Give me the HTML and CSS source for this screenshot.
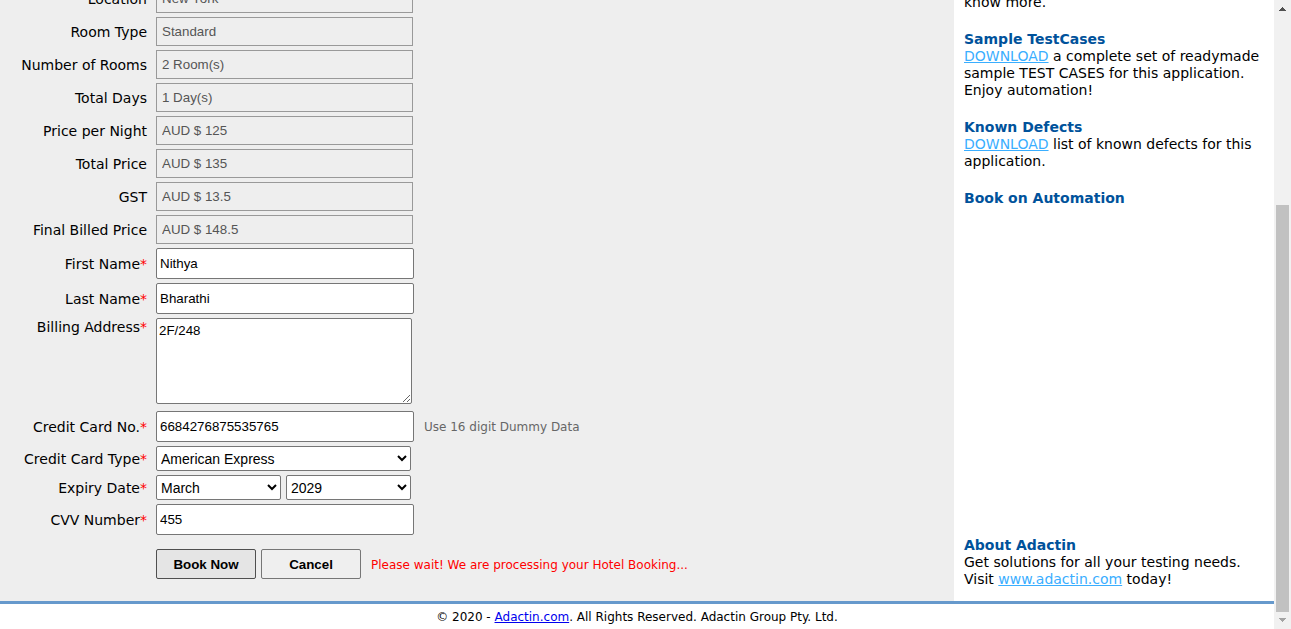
FILE: index.html
```html
<!DOCTYPE html>
<html lang="en">
<head>
<meta charset="utf-8">
<title>Adactin.com - Book Hotel</title>
<link rel="stylesheet" href="styles.css">
</head>
<body>
<div class="page">
  <div class="columns">
    <main class="main">
      <form class="form">
        <div class="row"><label for="location">Location</label><input class="readonly" id="location" value="New York" readonly></div>
        <div class="row"><label for="room-type">Room Type</label><input class="readonly" id="room-type" value="Standard" readonly></div>
        <div class="row"><label for="rooms">Number of Rooms</label><input class="readonly" id="rooms" value="2 Room(s)" readonly></div>
        <div class="row"><label for="days">Total Days</label><input class="readonly" id="days" value="1 Day(s)" readonly></div>
        <div class="row"><label for="night">Price per Night</label><input class="readonly" id="night" value="AUD $ 125" readonly></div>
        <div class="row"><label for="total">Total Price</label><input class="readonly" id="total" value="AUD $ 135" readonly></div>
        <div class="row"><label for="gst">GST</label><input class="readonly" id="gst" value="AUD $ 13.5" readonly></div>
        <div class="row"><label for="billed">Final Billed Price</label><input class="readonly" id="billed" value="AUD $ 148.5" readonly></div>
        <div class="row"><label for="first">First Name<span class="req">*</span></label><input class="field" id="first" value="Nithya"></div>
        <div class="row"><label for="last">Last Name<span class="req">*</span></label><input class="field" id="last" value="Bharathi"></div>
        <div class="row row-top"><label for="address">Billing Address<span class="req">*</span></label><textarea class="area" id="address">2F/248</textarea></div>
        <div class="row"><label for="card">Credit Card No.<span class="req">*</span></label><div class="group group-wide"><input class="field" id="card" value="6684276875535765"><span class="hint">Use 16 digit Dummy Data</span></div></div>
        <div class="row"><label for="card-type">Credit Card Type<span class="req">*</span></label><select class="select" id="card-type"><option>American Express</option></select></div>
        <div class="row"><label for="month">Expiry Date<span class="req">*</span></label><div class="group"><select class="select select-half" id="month"><option>March</option></select><select class="select select-half" aria-label="Expiry year"><option>2029</option></select></div></div>
        <div class="row"><label for="cvv">CVV Number<span class="req">*</span></label><input class="field" id="cvv" value="455"></div>
        <div class="row row-actions"><span></span><div class="group"><button class="button button-active" type="button">Book Now</button><button class="button" type="button">Cancel</button><span class="status">Please wait! We are processing your Hotel Booking...</span></div></div>
      </form>
    </main>
    <aside class="side">
      <section><p>know more.</p></section>
      <section><h2>Sample TestCases</h2><p><a href="#">DOWNLOAD</a> a complete set of readymade sample TEST CASES for this application. Enjoy automation!</p></section>
      <section><h2>Known Defects</h2><p><a href="#">DOWNLOAD</a> list of known defects for this application.</p></section>
      <section class="book"><h2>Book on Automation</h2></section>
      <section><h2>About Adactin</h2><p>Get solutions for all your testing needs. Visit <a href="#">www.adactin.com</a> today!</p></section>
    </aside>
  </div>
  <footer class="footer">© 2020 - <a href="#">Adactin.com</a>. All Rights Reserved. Adactin Group Pty. Ltd.</footer>
</div>
<div class="scrollbar" aria-hidden="true">
  <svg width="17" height="17" viewBox="0 0 17 17" shape-rendering="crispEdges"><path fill="#505050" d="M8 7h1v1h1v1h1v1h1v1H5v-1h1V9h1V8h1z"/></svg>
  <div class="thumb"></div>
  <svg width="17" height="17" viewBox="0 0 17 17" shape-rendering="crispEdges"><path fill="#a3a3a3" d="M5 6h7v1h-1v1h-1v1H9v1H8V9H7V8H6V7H5z"/></svg>
</div>
</body>
</html>
```
FILE: styles.css
```css
* { box-sizing: border-box; }

body {
  margin: 0;
  display: flex;
  height: 100vh;
  overflow: hidden;
  background: #fff;
  color: #000;
  font-family: Verdana, "DejaVu Sans", sans-serif;
  font-size: 14px;
  line-height: 17px;
}

.page {
  flex: 1;
  min-width: 0;
  display: flex;
  flex-direction: column;
}

.columns {
  flex: 1;
  min-height: 0;
  display: flex;
  border-bottom: 3px solid #69c;
}

.main {
  flex: 1;
  min-width: 0;
  background: #eee;
}

.form {
  display: flex;
  flex-direction: column;
  gap: 4px;
  margin-top: -16px;
}

.row {
  display: grid;
  grid-template-columns: 147px 1fr;
  column-gap: 9px;
  align-items: center;
  justify-items: start;
}

.row label {
  justify-self: end;
  padding-top: 2px;
  white-space: nowrap;
}

.row-top {
  align-items: start;
  margin-bottom: 3px;
}

.row-top label { padding-top: 1px; }

.row-actions { margin-top: 10px; }

.req {
  color: #f00;
  font-size: 14px;
  line-height: 14px;
}

input, textarea {
  font-family: "Liberation Sans", Arial, sans-serif;
}

.readonly {
  width: 257px;
  height: 29px;
  padding: 0 5px;
  border: 1px solid #999;
  background: #eee;
  color: #555;
}

.field {
  width: 258px;
  height: 31px;
  padding: 0 3px;
  border: 1px solid #767676;
  border-radius: 2px;
  background: #fff;
}

.area {
  width: 256px;
  height: 86px;
  padding: 4px 2px;
  border: 1px solid #767676;
  border-radius: 2px;
  background: #fff;
}

.select {
  width: 255px;
  height: 25px;
  padding: 0;
  border: 1px solid #767676;
  border-radius: 2px;
  background: #fff;
  color: #000;
  font-family: "Liberation Sans", Arial, sans-serif;
  font-size: 14px;
}

.select-half { width: 125px; }

.group {
  display: flex;
  align-items: center;
  gap: 5px;
}

.group-wide { gap: 10px; }

.hint {
  padding-top: 2px;
  color: #666;
  font-size: 12px;
}

.button {
  width: 100px;
  height: 30px;
  padding: 0;
  border: 1px solid #767676;
  border-radius: 2px;
  background: #efefef;
  color: #000;
  font-family: "Liberation Sans", Arial, sans-serif;
  font-weight: bold;
}

.button-active {
  border-color: #4f4f4f;
  background: #e5e5e5;
}

.status {
  margin-left: 5px;
  padding-top: 2px;
  color: #f00;
  font-size: 12px;
}

.side {
  width: 320px;
  padding: 0 10px;
  display: flex;
  flex-direction: column;
  gap: 20px;
  margin-top: -6px;
}

.side h2, .side p {
  margin: 0;
  font-size: 14px;
}

.side h2 { color: #00529b; }
.side a { color: #3aaeff; }
.book { min-height: 327px; }

.footer {
  height: 25px;
  line-height: 27px;
  font-size: 12px;
  text-align: center;
}

.footer a { color: #00e; }

.scrollbar {
  width: 17px;
  display: flex;
  flex-direction: column;
  justify-content: space-between;
  background: #f1f1f1;
}

.scrollbar svg { display: block; }

.thumb {
  flex: 1;
  margin: 188px 2px 0;
  background: #c1c1c1;
}
```
